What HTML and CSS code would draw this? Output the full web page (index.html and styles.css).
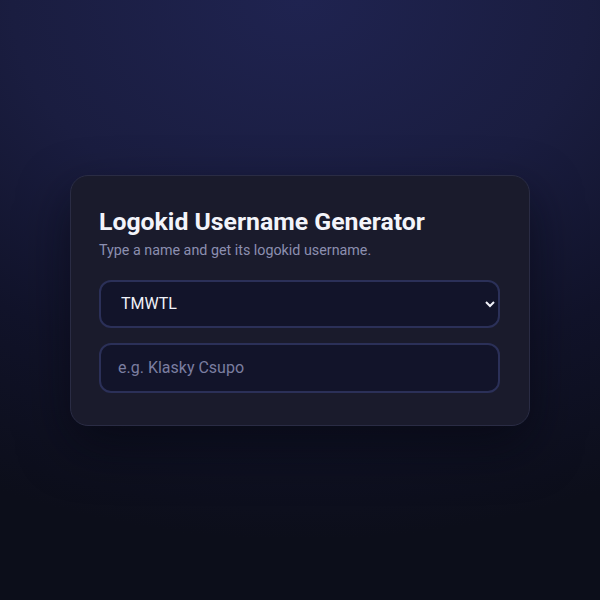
FILE: index.html
```html
<!DOCTYPE html>
<html lang="en">
<head>
<meta charset="utf-8">
<title>Logokid Username Generator</title>
<link rel="stylesheet" href="styles.css">
</head>
<body>
<main class="card">
  <h1 class="title">Logokid Username Generator</h1>
  <p class="subtitle">Type a name and get its logokid username.</p>
  <div class="fields">
    <select class="field select">
      <option>TMWTL</option>
    </select>
    <input class="field input" type="text" placeholder="e.g. Klasky Csupo">
  </div>
</main>
</body>
</html>
```
FILE: styles.css
```css
* { box-sizing: border-box; }
html, body { height: 100%; }
body {
  margin: 0;
  font-family: Roboto, "Noto Sans", "Liberation Sans", sans-serif;
  background: radial-gradient(ellipse 120% 90% at 50% 0%, #1f2350 0%, #1a1d40 40%, #11132a 70%, #0c0e1a 100%);
  display: flex;
  align-items: center;
  justify-content: center;
  color: #fff;
}
.card {
  width: 460px;
  padding: 30px 29px 32px 28px;
  background: #1a1b2c;
  border: 1px solid #2a2c44;
  border-radius: 18px;
  box-shadow: 0 20px 50px rgba(5, 6, 15, 0.6);
}
.title {
  margin: 0;
  font-size: 24.8px;
  line-height: 32px;
  font-weight: 700;
  color: #f3f4fa;
}
.subtitle {
  margin: 2px 0 0;
  font-size: 14.3px;
  line-height: 20px;
  color: #8c8fb0;
}
.fields {
  margin-top: 20px;
  display: flex;
  flex-direction: column;
  gap: 15px;
}
.field {
  width: 100%;
  height: 48px;
  border: 2px solid #2b3058;
  border-radius: 12px;
  background: #12142a;
  color: #f0f1f8;
  font-family: inherit;
  font-size: 16px;
  padding: 0 16px;
  outline: none;
}
.select {
  color-scheme: dark;
  padding-right: 6px;
  padding-left: 16px;
}
.input {
  height: 50px;
  padding-left: 17px;
}
.input::placeholder { color: #7b7ea0; }
```
